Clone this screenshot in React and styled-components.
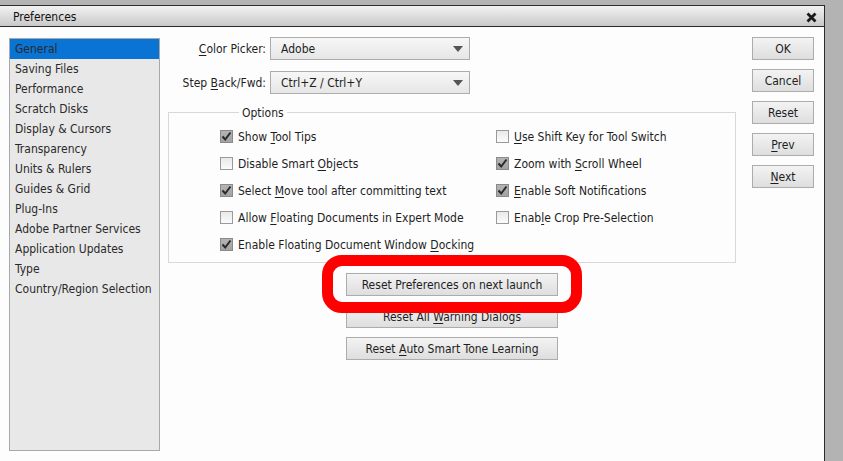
import React from "react";
import styled, { createGlobalStyle } from "styled-components";

const Global = createGlobalStyle`
  html, body { margin: 0; padding: 0; }
  body {
    background: #b3b3b3;
    font-family: "DejaVu Sans Condensed", "DejaVu Sans", sans-serif;
    font-size: 12px;
    color: #1e1e1e;
  }
`;

const Page = styled.div`
  height: 461px;
  padding-top: 5px;
  box-sizing: border-box;
  overflow: hidden;
`;

const Window = styled.div`
  width: 825px;
  height: 456px;
  box-sizing: border-box;
  border-top: 1px solid #2b2b2b;
  border-right: 1px solid #2b2b2b;
  background: #fdfdfd;
  display: flex;
  flex-direction: column;
`;

const TitleBar = styled.div`
  height: 21px;
  box-sizing: border-box;
  flex: none;
  display: flex;
  align-items: center;
  justify-content: space-between;
  padding: 2px 7px 0 13px;
  background: linear-gradient(#f2f2f2, #c9c9c9);
  border-bottom: 1px solid #2b2b2b;
  color: #111;
`;

const Body = styled.div`
  flex: 1;
  display: flex;
  padding: 11px 0 0 9px;
  min-height: 0;
`;

const Sidebar = styled.ul`
  list-style: none;
  margin: 0;
  padding: 0;
  width: 151px;
  height: 413px;
  box-sizing: border-box;
  background: #e8e8e8;
  border: 1px solid #a8a8a8;
  flex: none;
`;

const NavItem = styled.li`
  height: 20px;
  line-height: 20px;
  padding-left: 5px;
  color: #2a2a2a;
  background: ${(p) => (p.$active ? "#0a74d4" : "transparent")};
  white-space: nowrap;
`;

const Main = styled.div`
  width: 567px;
  margin-left: 9px;
  margin-top: -1px;
  flex: none;
  display: flex;
  flex-direction: column;
`;

const FieldRow = styled.div`
  display: flex;
  align-items: center;
  height: 23px;
  margin-bottom: ${(p) => p.$mb || 0}px;
`;

const FieldLabel = styled.label`
  width: 97px;
  text-align: right;
  margin-right: 4px;
  color: #1e1e1e;
`;

const Select = styled.div`
  width: 200px;
  height: 23px;
  box-sizing: border-box;
  border: 1px solid #acacac;
  background: linear-gradient(#f7f7f7, #e6e6e6);
  display: flex;
  align-items: center;
  justify-content: space-between;
  padding: 0 6px 0 10px;
`;

const Arrow = styled.span`
  width: 0;
  height: 0;
  border-left: 5px solid transparent;
  border-right: 5px solid transparent;
  border-top: 6px solid #555;
`;

const Group = styled.fieldset`
  margin: 11px 0 0 -1px;
  padding: 4px 0 4px 51px;
  border: 1px solid #d8d8d8;
  min-width: 0;
  display: grid;
  grid-template-columns: 276px auto;
  grid-auto-rows: 27px;
`;

const Legend = styled.legend`
  margin-left: 19px;
  padding: 0 3px;
  line-height: 14px;
  color: #1e1e1e;
  transform: translateY(1px);
`;

const Check = styled.label`
  display: flex;
  align-items: center;
  gap: 5px;
  white-space: nowrap;
  color: #1e1e1e;
`;

const Box = styled.span`
  width: 13px;
  height: 13px;
  box-sizing: border-box;
  flex: none;
  border: 1px solid ${(p) => (p.$on ? "#8a8a8a" : "#9a9a9a")};
  background: ${(p) =>
    p.$on ? "linear-gradient(#b4b4b4, #a2a2a2)" : "linear-gradient(#e9e9e9, #fbfbfb)"};
  display: flex;
  align-items: center;
  justify-content: center;
`;

const U = styled.span`
  text-decoration: underline;
  text-underline-offset: 2px;
`;

const Stack = styled.div`
  position: relative;
  margin: 10px 0 0 177px;
  width: 212px;
  display: flex;
  flex-direction: column;
  gap: 9px;
`;

const Button = styled.div`
  height: 23px;
  box-sizing: border-box;
  border: 1px solid #acacac;
  background: linear-gradient(#f3f3f3, #dedede);
  display: flex;
  align-items: center;
  justify-content: center;
  color: #1e1e1e;
  white-space: pre;
  width: ${(p) => p.$w || "auto"};
`;

const Highlight = styled.div`
  position: absolute;
  left: -24px;
  top: -18px;
  width: 260px;
  height: 58px;
  box-sizing: border-box;
  border: 11px solid #ff0000;
  border-radius: 20px;
  pointer-events: none;
`;

const Actions = styled.div`
  margin-left: 16px;
  margin-top: -1px;
  display: flex;
  flex-direction: column;
  gap: 9px;
  flex: none;
`;

const CheckMark = () => (
  <svg width="11" height="11" viewBox="0 0 11 11">
    <path d="M1.5 5.5 L4.2 8.5 L9.5 1.5" fill="none" stroke="#2a2a2a" strokeWidth="2" />
  </svg>
);

const CloseIcon = () => (
  <svg width="11" height="11" viewBox="0 0 11 11">
    <path d="M1.5 1.5 L9.5 9.5 M9.5 1.5 L1.5 9.5" stroke="#1a1a1a" strokeWidth="2.8" />
  </svg>
);

const nav = [
  "General",
  "Saving Files",
  "Performance",
  "Scratch Disks",
  "Display & Cursors",
  "Transparency",
  "Units & Rulers",
  "Guides & Grid",
  "Plug-Ins",
  "Adobe Partner Services",
  "Application Updates",
  "Type",
  "Country/Region Selection",
];

const Opt = ({ on, children }) => (
  <Check>
    <Box $on={on}>{on && <CheckMark />}</Box>
    <span>{children}</span>
  </Check>
);

export default function App() {
  return (
    <Page>
      <Global />
      <Window>
        <TitleBar>
          <span>Preferences</span>
          <CloseIcon />
        </TitleBar>
        <Body>
          <Sidebar>
            {nav.map((n, i) => (
              <NavItem key={n} $active={i === 0}>
                {n}
              </NavItem>
            ))}
          </Sidebar>
          <Main>
            <FieldRow $mb={11}>
              <FieldLabel>
                <U>C</U>olor Picker:
              </FieldLabel>
              <Select>
                <span>Adobe</span>
                <Arrow />
              </Select>
            </FieldRow>
            <FieldRow>
              <FieldLabel>
                Step <U>B</U>ack/Fwd:
              </FieldLabel>
              <Select>
                <span>Ctrl+Z / Ctrl+Y</span>
                <Arrow />
              </Select>
            </FieldRow>
            <Group>
              <Legend>Options</Legend>
              <Opt on>
                Show <U>T</U>ool Tips
              </Opt>
              <Opt>
                <U>U</U>se Shift Key for Tool Switch
              </Opt>
              <Opt>
                Disable Smart <U>O</U>bjects
              </Opt>
              <Opt on>
                Zoom with <U>S</U>croll Wheel
              </Opt>
              <Opt on>
                Select <U>M</U>ove tool after committing text
              </Opt>
              <Opt on>
                <U>E</U>nable Soft Notifications
              </Opt>
              <Opt>
                Allow <U>F</U>loating Documents in Expert Mode
              </Opt>
              <Opt>
                Enab<U>l</U>e Crop Pre-Selection
              </Opt>
              <Opt on>
                Enable Floating Document Window <U>D</U>ocking
              </Opt>
            </Group>
            <Stack>
              <Button>
                <span>Reset Preferences on next launch</span>
              </Button>
              <Button>
                <span>
                  Reset All <U>W</U>arning Dialogs
                </span>
              </Button>
              <Button>
                <span>
                  Reset <U>A</U>uto Smart Tone Learning
                </span>
              </Button>
              <Highlight />
            </Stack>
          </Main>
          <Actions>
            <Button $w="62px">OK</Button>
            <Button $w="62px">Cancel</Button>
            <Button $w="62px">Reset</Button>
            <Button $w="62px">
              <span>
                <U>P</U>rev
              </span>
            </Button>
            <Button $w="62px">
              <span>
                <U>N</U>ext
              </span>
            </Button>
          </Actions>
        </Body>
      </Window>
    </Page>
  );
}
